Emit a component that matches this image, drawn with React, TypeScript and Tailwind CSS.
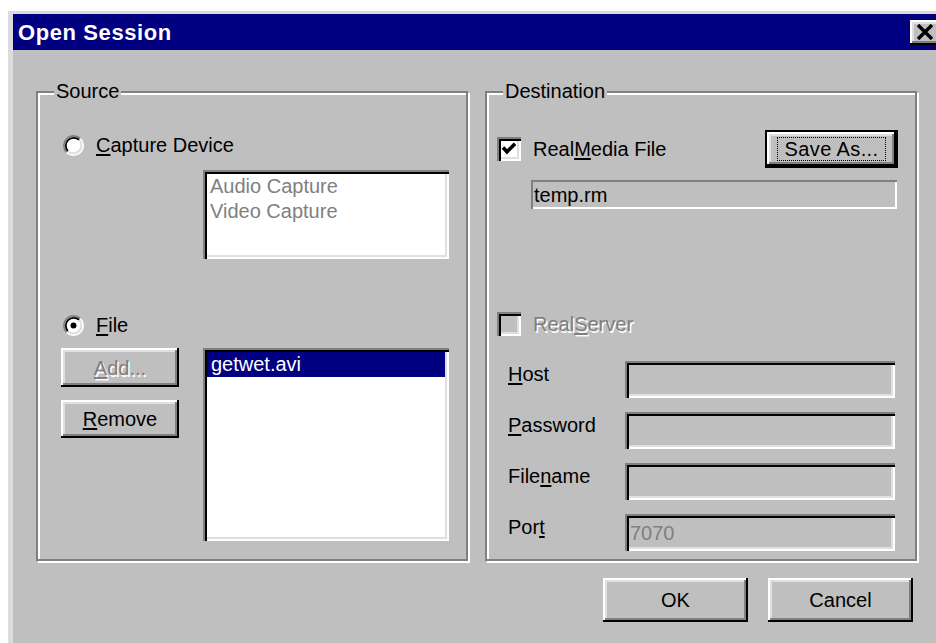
import type { ReactNode } from 'react';

const raised =
  'shadow-[inset_-2px_-2px_0_#000,inset_2px_2px_0_#fff,inset_-4px_-4px_0_#808080,inset_4px_4px_0_#dfdfdf]';
const sunken =
  'shadow-[inset_2px_2px_0_#808080,inset_4px_4px_0_#000,inset_-2px_-2px_0_#fff,inset_-4px_-4px_0_#dfdfdf]';
const disabledText = 'text-[#808080] [text-shadow:1.5px_1.5px_0_#fff]';

// Win95 style radio: split bevel ring with white well
function Radio({ checked }: { checked?: boolean }) {
  return (
    <svg width="21" height="21" viewBox="0 0 12 12" className="shrink-0">
      <circle cx="6" cy="6" r="4.8" fill="#fff" />
      <path d="M2.11 9.89A5.5 5.5 0 0 1 9.89 2.11" fill="none" stroke="#808080" strokeWidth="1" />
      <path d="M9.89 2.11A5.5 5.5 0 0 1 2.11 9.89" fill="none" stroke="#fff" strokeWidth="1" />
      <path d="M2.82 9.18A4.5 4.5 0 0 1 9.18 2.82" fill="none" stroke="#000" strokeWidth="1" />
      <path d="M9.18 2.82A4.5 4.5 0 0 1 2.82 9.18" fill="none" stroke="#dfdfdf" strokeWidth="1" />
      {checked && <circle cx="6" cy="6" r="1.7" fill="#000" />}
    </svg>
  );
}

function Checkbox({ checked, disabled }: { checked?: boolean; disabled?: boolean }) {
  return (
    <div
      className={`w-[24px] h-[24px] shrink-0 flex items-center justify-center ${sunken} ${
        disabled ? 'bg-[#bfbfbf]' : 'bg-white'
      }`}
    >
      {checked && (
        <svg width="16" height="16" viewBox="0 0 8 8">
          <path d="M1 3.3 L3 5.4 L7 1.4" fill="none" stroke="#000" strokeWidth="1.8" />
        </svg>
      )}
    </div>
  );
}

function Button({
  children,
  className = '',
  disabled,
}: {
  children: ReactNode;
  className?: string;
  disabled?: boolean;
}) {
  return (
    <div
      className={`flex items-center justify-center bg-[#bfbfbf] text-[20px] ${raised} ${
        disabled ? disabledText : 'text-black'
      } ${className}`}
    >
      {children}
    </div>
  );
}

function GroupBox({ label, children }: { label: string; children: ReactNode }) {
  return (
    <div className="relative w-[432px] h-[470px] border-2 border-[#808080] shadow-[inset_2px_2px_0_#fff,2px_2px_0_#fff]">
      <span className="absolute -top-[13px] left-[16px] px-[2px] bg-[#bfbfbf] text-[20px] leading-[22px] text-black">
        {label}
      </span>
      {children}
    </div>
  );
}

function FieldRow({ label, mnemonic, rest, value }: { label: string; mnemonic: string; rest: string; value?: string }) {
  return (
    <div className="flex items-start">
      <span className="ml-[21px] w-[117px] pt-[1px] text-[20px] leading-[24px] text-black">
        {label}
        <u className="underline-offset-2">{mnemonic}</u>
        {rest}
      </span>
      <div className={`w-[270px] h-[37px] bg-[#bfbfbf] flex items-center pl-[5px] text-[20px] text-[#808080] ${sunken}`}>
        {value}
      </div>
    </div>
  );
}

export default function App() {
  return (
    <div className="w-[936px] h-[643px] overflow-hidden bg-white font-['Liberation_Sans',Arial,sans-serif]">
      <div className="ml-[8px] mt-[11px] w-[940px] h-[640px] border-l-[5px] border-t-[3px] border-[#dcdcdc] bg-[#bfbfbf] flex flex-col">
        {/* title bar */}
        <div className="h-[36px] bg-[#000080] flex items-center">
          <span className="ml-[5px] text-white font-bold text-[22px] tracking-[0.6px]">Open Session</span>
          <div className={`ml-auto mr-[8px] w-[30px] h-[25px] bg-[#bfbfbf] flex items-center justify-center ${raised}`}>
            <svg width="18" height="16" viewBox="0 0 9 8">
              <path d="M1 0.5 L8 7.5 M8 0.5 L1 7.5" stroke="#000" strokeWidth="1.7" />
            </svg>
          </div>
        </div>

        <div className="pl-[23px] pt-[41px]">
          <div className="flex gap-[17px]">
            <GroupBox label="Source">
              <div className="flex flex-col">
                <div className="mt-[40px] ml-[25px] h-[24px] flex items-center gap-[12px] text-[20px] text-black">
                  <Radio />
                  <span>
                    <u className="underline-offset-2">C</u>apture Device
                  </span>
                </div>
                <div
                  className={`mt-[13px] ml-[165px] w-[246px] h-[89px] bg-white p-[4px] text-[20px] leading-[25px] text-[#808080] ${sunken}`}
                >
                  <div className="pl-[3px]">Audio Capture</div>
                  <div className="pl-[3px]">Video Capture</div>
                </div>
                <div className="mt-[54px] ml-[25px] h-[24px] flex items-center gap-[12px] text-[20px] text-black">
                  <Radio checked />
                  <span>
                    <u className="underline-offset-2">F</u>ile
                  </span>
                </div>
                <div className="mt-[11px] ml-[23px] flex gap-[24px]">
                  <div className="w-[118px] flex flex-col gap-[13px]">
                    <Button className="h-[39px]" disabled>
                      <span>
                        <u className="underline-offset-2">A</u>dd...
                      </span>
                    </Button>
                    <Button className="h-[38px]">
                      <span>
                        <u className="underline-offset-2">R</u>emove
                      </span>
                    </Button>
                  </div>
                  <div className={`w-[246px] h-[193px] bg-white p-[4px] text-[20px] leading-[25px] ${sunken}`}>
                    <div className="bg-[#000080] text-white pl-[4px]">getwet.avi</div>
                  </div>
                </div>
              </div>
            </GroupBox>

            <GroupBox label="Destination">
              <div className="flex flex-col">
                <div className="mt-[37px] h-[38px] flex items-center">
                  <div className="ml-[10px]">
                    <Checkbox checked />
                  </div>
                  <span className="ml-[12px] text-[20px] text-black">
                    Real<u className="underline-offset-2">M</u>edia File
                  </span>
                  <div className="ml-auto mr-[17px] w-[133px] h-[38px] border-2 border-black">
                    <Button className="w-full h-full">
                      <span className="px-[6px] leading-[22px] tracking-[0.4px] border border-dotted border-black">
                        Save As...
                      </span>
                    </Button>
                  </div>
                </div>
                <div className="mt-[12px] ml-[44px] w-[366px] h-[29px] flex items-center pl-[3px] text-[20px] text-black shadow-[inset_2px_2px_0_#808080,inset_-2px_-2px_0_#fff]">
                  temp.rm
                </div>
                <div className="mt-[103px] ml-[10px] h-[24px] flex items-center gap-[12px] text-[20px]">
                  <Checkbox disabled />
                  <span className={disabledText}>
                    Real<u className="underline-offset-2">S</u>erver
                  </span>
                </div>
                <div className="mt-[25px] flex flex-col gap-[14px]">
                  <FieldRow label="" mnemonic="H" rest="ost" />
                  <FieldRow label="" mnemonic="P" rest="assword" />
                  <FieldRow label="File" mnemonic="n" rest="ame" />
                  <FieldRow label="Por" mnemonic="t" rest="" value="7070" />
                </div>
              </div>
            </GroupBox>
          </div>

          <div className="mt-[17px] w-[881px] pr-[4px] flex justify-end gap-[20px]">
            <Button className="w-[145px] h-[44px]">OK</Button>
            <Button className="w-[145px] h-[44px]">Cancel</Button>
          </div>
        </div>
      </div>
    </div>
  );
}
